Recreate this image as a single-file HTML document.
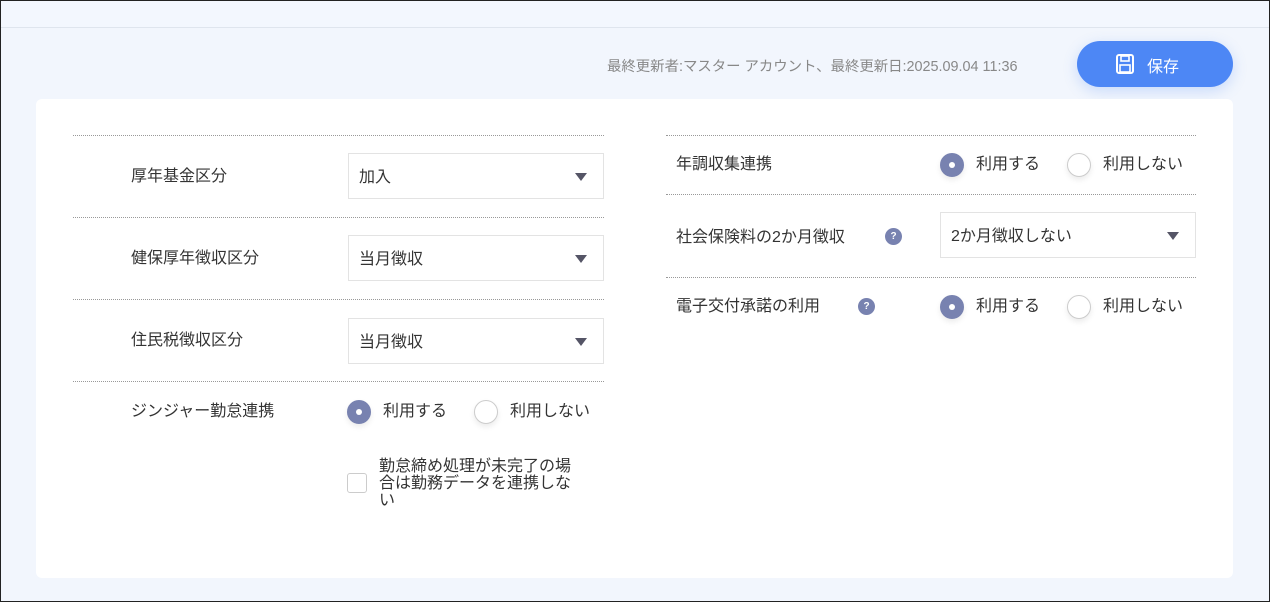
<!DOCTYPE html>
<html><head><meta charset="utf-8"><style>
*{box-sizing:border-box;margin:0;padding:0}
body{width:1270px;height:602px;background:#f2f6fd;font-family:"Liberation Sans","Noto Sans CJK JP",sans-serif;color:#333;position:relative;overflow:hidden}
.a{position:absolute}
.frame{left:0;top:0;width:1270px;height:602px;border:1px solid #222;pointer-events:none}
.top{left:0;top:0;width:1270px;height:28px;border-bottom:1px solid #dfe5ee;background:#f3f7fe}
.meta{left:607px;top:55px;font-size:14.4px;color:#888}
.btn{left:1077px;top:41px;width:156px;height:46px;border-radius:23px;background:#4d87f5;color:#fff;font-size:16px;box-shadow:0 4px 14px rgba(77,135,245,.25)}
.card{left:36px;top:99px;width:1197px;height:479px;background:#fff;border-radius:6px}
.dl{height:0;border-top:1px dotted #999}
.lab{font-size:16px;color:#333}
.sel{width:256px;height:46px;border:1px solid #e3e3e3;background:#fff;font-size:16px;padding:9px 10px}
.sel:after{content:"";position:absolute;right:16px;top:19px;border-left:6px solid transparent;border-right:6px solid transparent;border-top:8px solid #556}
.r{width:24px;height:24px;border-radius:50%;border:1px solid #ccc;background:#fff;box-shadow:0 3px 6px rgba(0,0,0,.08)}
.r.on{background:#7882b0;border-color:#7882b0}
.r.on:after{content:"";position:absolute;left:8px;top:8px;width:6px;height:6px;border-radius:50%;background:#fff}
.q{width:17px;height:17px;border-radius:50%;background:#7882b0;color:#fff;font-size:10px;font-weight:bold;text-align:center;line-height:17px}
</style></head><body>
<div class="a top"></div>
<div class="a meta">最終更新者:マスター アカウント、最終更新日:2025.09.04 11:36</div>
<div class="a btn">
<svg class="a" style="left:39px;top:13px" width="18" height="20" viewBox="0 0 18 20"><rect x="1" y="1" width="16" height="18" rx="2" fill="none" stroke="#fff" stroke-width="2"/><rect x="5" y="2" width="8" height="5" fill="none" stroke="#fff" stroke-width="1.6"/><rect x="4" y="11" width="10" height="7" fill="none" stroke="#fff" stroke-width="1.6"/></svg>
<span class="a" style="left:70px;top:12px">保存</span></div>
<div class="a card"></div>

<div class="a dl" style="left:73px;top:135px;width:531px"></div>
<div class="a dl" style="left:73px;top:217px;width:531px"></div>
<div class="a dl" style="left:73px;top:299px;width:531px"></div>
<div class="a dl" style="left:73px;top:381px;width:531px"></div>
<div class="a lab" style="left:131px;top:162px">厚年基金区分</div>
<div class="a sel" style="left:348px;top:153px">加入</div>
<div class="a lab" style="left:131px;top:244px">健保厚年徴収区分</div>
<div class="a sel" style="left:348px;top:235px">当月徴収</div>
<div class="a lab" style="left:131px;top:326px">住民税徴収区分</div>
<div class="a sel" style="left:348px;top:318px">当月徴収</div>
<div class="a lab" style="left:131px;top:397px">ジンジャー勤怠連携</div>
<div class="a r on" style="left:347px;top:400px"></div>
<div class="a lab" style="left:383px;top:397px">利用する</div>
<div class="a r" style="left:474px;top:400px"></div>
<div class="a lab" style="left:510px;top:397px">利用しない</div>
<div class="a" style="left:347px;top:473px;width:20px;height:20px;border:1px solid #ccc;border-radius:3px"></div>
<div class="a lab" style="left:379px;top:458px;width:205px;line-height:17px">勤怠締め処理が未完了の場合は勤務データを連携しない</div>

<div class="a dl" style="left:666px;top:135px;width:530px"></div>
<div class="a dl" style="left:666px;top:194px;width:530px"></div>
<div class="a dl" style="left:666px;top:277px;width:530px"></div>
<div class="a lab" style="left:676px;top:150px">年調収集連携</div>
<div class="a r on" style="left:940px;top:153px"></div>
<div class="a lab" style="left:976px;top:150px">利用する</div>
<div class="a r" style="left:1067px;top:153px"></div>
<div class="a lab" style="left:1103px;top:150px">利用しない</div>
<div class="a lab" style="left:676px;top:223px">社会保険料の2か月徴収</div>
<div class="a q" style="left:885px;top:228px">?</div>
<div class="a sel" style="left:940px;top:212px">2か月徴収しない</div>
<div class="a lab" style="left:676px;top:292px">電子交付承諾の利用</div>
<div class="a q" style="left:858px;top:298px">?</div>
<div class="a r on" style="left:940px;top:295px"></div>
<div class="a lab" style="left:976px;top:292px">利用する</div>
<div class="a r" style="left:1067px;top:295px"></div>
<div class="a lab" style="left:1103px;top:292px">利用しない</div>
<div class="a frame"></div>
</body></html>
